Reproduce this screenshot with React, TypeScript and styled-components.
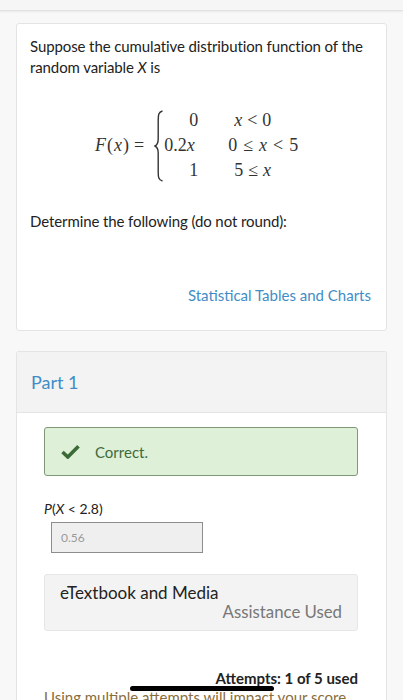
import styled, { createGlobalStyle } from "styled-components";

const GlobalStyle = createGlobalStyle`
  html, body {
    margin: 0;
    padding: 0;
    background: #f8f8f8;
    font-family: Lato, "Open Sans", sans-serif;
    color: #222;
  }
`;

const TopStrip = styled.div`
  height: 10px;
  background: #f6f6f6;
  border-bottom: 1px solid #e2e2e2;
  box-shadow: 0 1px 2px rgba(0, 0, 0, 0.06);
`;

const Page = styled.div`
  padding: 12px 16px 0;
  display: flex;
  flex-direction: column;
  gap: 20px;
  height: 689px;
  overflow: hidden;
`;

const Card = styled.div`
  background: #fff;
  border: 1px solid #e4e4e4;
  border-radius: 3px;
`;

const QuestionCard = styled(Card)`
  height: 308px;
  padding: 12px 14px 0 13px;
  box-sizing: border-box;
  display: flex;
  flex-direction: column;
`;

const Para = styled.p`
  margin: 0;
  font-size: 15px;
  line-height: 21px;
  letter-spacing: -0.1px;
`;

const Italic = styled.i`
  font-style: italic;
`;

const MathBlock = styled.div`
  margin: 30px 0 0 65px;
  display: flex;
  align-items: center;
  font-family: "Liberation Serif", "Times New Roman", serif;
  font-size: 18px;
  color: #333;
`;

const Lhs = styled.span`
  white-space: nowrap;
  letter-spacing: 1px;
`;

const Op = styled.span<{ $left: number; $right: number }>`
  margin: 0 ${(p) => p.$right}px 0 ${(p) => p.$left}px;
`;

const Brace = styled.svg`
  width: 10px;
  height: 72px;
  flex: none;
`;

const Cases = styled.div`
  display: grid;
  grid-template-columns: 34px 110px;
  grid-auto-rows: 25px;
  align-items: center;
`;

const Val = styled.span<{ $shift?: number }>`
  text-align: right;
  padding-right: ${(p) => p.$shift ?? 0}px;
  white-space: nowrap;
`;

const Cond = styled.span<{ $indent: number }>`
  padding-left: ${(p) => p.$indent}px;
  white-space: nowrap;
`;

const DetermineText = styled(Para)`
  margin-top: 28px;
`;

const LinkRow = styled.div`
  margin-top: 54px;
  display: flex;
  justify-content: flex-end;
  padding-right: 1px;
`;

const TableLink = styled.a`
  color: #3f8dc6;
  font-size: 15px;
  text-decoration: none;
`;

const PartCard = styled(Card)`
  flex: 1;
  display: flex;
  flex-direction: column;
  border-bottom: none;
`;

const PartHeader = styled.div`
  height: 60px;
  background: #f3f3f3;
  border-bottom: 1px solid #e4e4e4;
  display: flex;
  align-items: center;
  padding-left: 14px;
  font-size: 18px;
  color: #3f8dc6;
`;

const PartBody = styled.div`
  padding: 14px 28px 0 27px;
  display: flex;
  flex-direction: column;
`;

const Feedback = styled.div`
  height: 49px;
  box-sizing: border-box;
  background: #dff0d8;
  border: 1px solid #7f9878;
  border-radius: 3px;
  display: flex;
  align-items: center;
  padding-left: 16px;
  gap: 15px;
  color: #3f6b3c;
  font-size: 15px;
`;

const QLabel = styled.div`
  margin-top: 24px;
  font-size: 14px;
  color: #222;
`;

const AnswerBox = styled.div`
  margin: 5px 0 0 7px;
  width: 152px;
  height: 31px;
  box-sizing: border-box;
  background: #efefef;
  border: 1px solid #8d8d8d;
  display: flex;
  align-items: center;
  padding-left: 9px;
  font-size: 12px;
  color: #9a9a9a;
`;

const MediaBox = styled.div`
  margin-top: 21px;
  height: 57px;
  box-sizing: border-box;
  background: #f3f3f3;
  border: 1px solid #e6e6e6;
  border-radius: 3px;
  padding: 8px 15px 0 15px;
  display: flex;
  flex-direction: column;
`;

const MediaTitle = styled.span`
  font-size: 17px;
  line-height: 19px;
  color: #222;
`;

const MediaStatus = styled.span`
  align-self: flex-end;
  font-size: 16.8px;
  line-height: 19px;
  color: #777;
`;

const Attempts = styled.div`
  margin-top: 38px;
  text-align: right;
  font-size: 15px;
  font-weight: 700;
  color: #222;
`;

const Warning = styled.div`
  margin-top: 1px;
  font-size: 15px;
  color: #8a6d3b;
  white-space: nowrap;
`;

const HomeIndicator = styled.div`
  position: fixed;
  left: 130px;
  top: 686px;
  width: 144px;
  height: 5px;
  border-radius: 3px;
  background: #000;
`;

const CheckIcon = () => (
  <svg width="19" height="15" viewBox="0 0 19 15">
    <path d="M1.5 8 L6.8 13 L17.5 2.2" fill="none" stroke="#3a6b37" strokeWidth="3.6" strokeLinejoin="miter" />
  </svg>
);

export default function App() {
  return (
    <>
      <GlobalStyle />
      <TopStrip />
      <Page>
        <QuestionCard>
          <Para>
            Suppose the cumulative distribution function of the random variable <Italic>X</Italic> is
          </Para>
          <MathBlock>
            <Lhs>
              <i>F</i>(<i>x</i>)
            </Lhs>
            <Op $left={4} $right={10}>=</Op>
            <Brace viewBox="0 0 10 72">
              <path
                d="M8.5 1 C4.5 2 4.2 5 4.2 10 L4.2 29 C4.2 33 3 35 1 36 C3 37 4.2 39 4.2 43 L4.2 62 C4.2 67 4.5 70 8.5 71"
                fill="none"
                stroke="#333"
                strokeWidth="1.4"
              />
            </Brace>
            <Cases>
              <Val>0</Val>
              <Cond $indent={36}>
                <i>x</i>
                <Op $left={5} $right={5}>&lt;</Op>0
              </Cond>
              <Val $shift={5}>
                0.2<i>x</i>
              </Val>
              <Cond $indent={30}>
                0<Op $left={6} $right={6}>≤</Op>
                <i>x</i>
                <Op $left={6} $right={6}>&lt;</Op>5
              </Cond>
              <Val>1</Val>
              <Cond $indent={36}>
                5<Op $left={5} $right={5}>≤</Op>
                <i>x</i>
              </Cond>
            </Cases>
          </MathBlock>
          <DetermineText>Determine the following (do not round):</DetermineText>
          <LinkRow>
            <TableLink href="#">Statistical Tables and Charts</TableLink>
          </LinkRow>
        </QuestionCard>
        <PartCard>
          <PartHeader>Part 1</PartHeader>
          <PartBody>
            <Feedback>
              <CheckIcon />
              <span>Correct.</span>
            </Feedback>
            <QLabel>
              <Italic>P</Italic>(<Italic>X</Italic> &lt; 2.8)
            </QLabel>
            <AnswerBox>0.56</AnswerBox>
            <MediaBox>
              <MediaTitle>eTextbook and Media</MediaTitle>
              <MediaStatus>Assistance Used</MediaStatus>
            </MediaBox>
            <Attempts>Attempts: 1 of 5 used</Attempts>
            <Warning>Using multiple attempts will impact your score.</Warning>
          </PartBody>
        </PartCard>
      </Page>
      <HomeIndicator />
    </>
  );
}
